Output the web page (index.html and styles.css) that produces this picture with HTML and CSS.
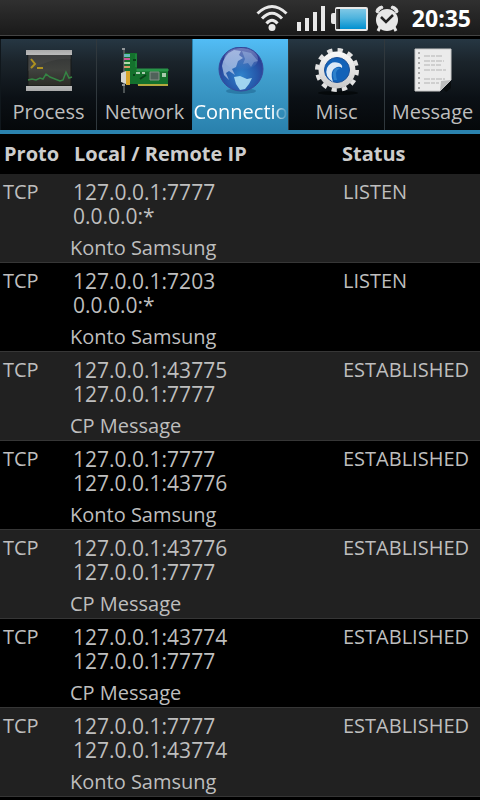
FILE: index.html
```html
<!DOCTYPE html>
<html lang="en">
<head>
<meta charset="utf-8">
<meta name="viewport" content="width=device-width, initial-scale=1">
<title>Connections</title>
<link rel="stylesheet" href="styles.css">
</head>
<body>
<header class="statusbar">
  <svg class="wifi" width="32" height="28" viewBox="0 0 32 28" fill="none" stroke="#e8e8e8" stroke-width="3">
    <path d="M1.500 9.500Q16-4.500 30.500 9.500M6 14.500Q16 4 26 14.500M10.500 19.500Q16 13 21.500 19.500"/>
    <circle cx="16" cy="23.500" r="3.500" fill="#e8e8e8" stroke="none"/>
  </svg>
  <svg class="signal" width="30" height="28" viewBox="0 0 30 28" fill="#e8e8e8">
    <path d="M1 18h4v9H1zM9 14h4v13H9zM17 8h4v19h-4zM25 2h4v25h-4z"/>
  </svg>
  <svg class="battery" width="38" height="28" viewBox="0 0 38 28">
    <defs>
      <linearGradient id="charge" x1="0" y1="0" x2="0" y2="1"><stop offset="0" stop-color="#7fc8e6"/><stop offset=".45" stop-color="#4fb4de"/><stop offset="1" stop-color="#0090d0"/></linearGradient>
      <linearGradient id="drained"><stop offset="0" stop-color="#555"/><stop offset="1" stop-color="#050505"/></linearGradient>
    </defs>
    <path d="M2 9H4V5q0-2 2-2h29q2 0 2 2v20q0 2-2 2H6q-2 0-2-2v-5H2q-2 0-2-2v-7q0-2 2-2z" fill="#e8e8e8"/>
    <path d="M5 5h5v20H5z" fill="url(#drained)"/>
    <path d="M9 5h26v20H9z" fill="url(#charge)"/>
  </svg>
  <svg class="alarm" width="26" height="28" viewBox="0 0 26 28" fill="#e8e8e8">
    <path d="M2 8Q2 3 8 2L9 4Q5 5 4 9zM24 8Q24 3 18 2L17 4Q21 5 22 9z" stroke="#e8e8e8" stroke-width="1"/>
    <path d="M6 23l-2 4M20 23l2 4" stroke="#e8e8e8" stroke-width="3"/>
    <circle cx="13" cy="16" r="11"/>
    <path d="M7 13l5 5 7-7" fill="none" stroke="#222" stroke-width="2.500"/>
  </svg>
  <time class="clock">20:35</time>
</header>

<nav class="tabs">
  <button class="tab" type="button">
    <svg class="tab-icon" viewBox="0 0 48 48">
      <defs>
        <linearGradient id="bar" x1="0" y1="0" x2="0" y2="1"><stop offset="0" stop-color="#aaa"/><stop offset=".5" stop-color="#f0f0f0"/><stop offset="1" stop-color="#aaa"/></linearGradient>
        <linearGradient id="screen" x1="0" y1="0" x2="0" y2="1"><stop offset="0" stop-color="#343636"/><stop offset=".5" stop-color="#40423e"/><stop offset="1" stop-color="#2c2c26"/></linearGradient>
      </defs>
      <path d="M3 7h43v32H3z" fill="url(#screen)" stroke="#161819"/>
      <path d="M3 24Q28 10 46 12V7H3z" fill="#555" opacity=".3"/>
      <path d="M1 3h46v5H1zM1 39h46v5H1z" fill="url(#bar)"/>
      <path d="M6 12l4 5-4 4M12 21h6" fill="none" stroke="#ae9120" stroke-width="2"/>
      <path d="M3 33l4-1 4 1 4-2 3 1 3-5 4 3 5 2 5 2 3-1 3-8 3 6 3-1" fill="none" stroke="#358544" stroke-width="1.500"/>
    </svg>
    <span class="tab-label">Process</span>
  </button>
  <button class="tab" type="button">
    <svg class="tab-icon" viewBox="0 0 48 48">
      <path d="M4 6h12v16h31v16H17l-1-1H4z" fill="#14712d"/>
      <path d="M16 22h31v2H16zM15 7v13" fill="#299448" stroke="#299448"/>
      <path d="M3 2v44" stroke="#4c5254" stroke-width="2"/>
      <path d="M1 2h3M1 38h3" stroke="#92979a" stroke-width="2"/>
      <path d="M3 7h6v3H3z" fill="#65b9b7"/><path d="M3 11h6v2H3z" fill="#cd5798"/><path d="M3 15h6v2H3z" fill="#b2d9ab"/><path d="M3 19h6v2H3z" fill="#d59b68"/>
      <path d="M5 24h4v14H5z" fill="#d8a529"/><path d="M0 26l5-2v13l-5-2z" fill="#d5d4cd"/>
      <path d="M17 37h30v2H17z" fill="#b4a93e"/>
      <path d="M29 25h9v8h-9z" fill="#50625a" stroke="#849389"/>
      <path d="M15 26h4m2 0h3m17 1h4m-4 2h4" stroke="#a8cbad" stroke-width="2"/>
      <path d="M19 32l6-4M12 13h3M12 28h2" stroke="#0a421a" stroke-width="2"/>
    </svg>
    <span class="tab-label">Network</span>
  </button>
  <button class="tab tab-active" type="button" aria-current="page">
    <svg class="tab-icon" viewBox="0 0 48 48">
      <defs>
        <radialGradient id="globe" cx=".5" cy=".65" r=".6"><stop offset="0" stop-color="#2f83cc"/><stop offset=".6" stop-color="#2659ab"/><stop offset="1" stop-color="#2b3990"/></radialGradient>
        <linearGradient id="shine" x1="0" y1="0" x2="0" y2="1"><stop offset="0" stop-color="#c4d2f2" stop-opacity=".45"/><stop offset="1" stop-color="#c4d2f2" stop-opacity="0"/></linearGradient>
        <filter id="haze"><feGaussianBlur stdDeviation=".7"/></filter>
      </defs>
      <ellipse cx="24" cy="44" rx="15" ry="3" fill="#1b608c" opacity=".5"/>
      <circle cx="24" cy="22" r="22" fill="url(#globe)" stroke="#374a9c"/>
      <g filter="url(#haze)">
        <path d="M5 19Q7 7 17 3l7 1-2 4 4 3-5 3-2 6-4 2 3 6-6-4-3 2 3 7-5-5z" fill="#a6bfe5" opacity=".8"/>
        <path d="M25 4l9 2 7 8-4 1-3 5-3-4-5 1 2-5z" fill="#7695cd" opacity=".65"/>
        <path d="M17 30l6-1 7 3 5-1-3 6-4 5-5 1-4-6z" fill="#a5d9f2" opacity=".95"/>
      </g>
      <ellipse cx="24" cy="12" rx="17" ry="11" fill="url(#shine)"/>
    </svg>
    <span class="tab-label">Connectio</span>
  </button>
  <button class="tab" type="button">
    <svg class="tab-icon" viewBox="0 0 48 48">
      <defs><linearGradient id="gear" x1="0" y1="0" x2="0" y2="1"><stop offset="0" stop-color="#fafafa"/><stop offset="1" stop-color="#c9c9c9"/></linearGradient></defs>
      <ellipse cx="25" cy="46" rx="20" ry="2" fill="#05090b"/>
      <circle cx="24" cy="23" r="20" fill="none" stroke="#e2e2e2" stroke-width="4" stroke-dasharray="5.240 5.232"/>
      <circle cx="24" cy="23" r="18.500" fill="url(#gear)"/>
      <circle cx="24" cy="23" r="12.500" fill="#1262b8" stroke="#1b5098"/>
      <path d="M20 35Q11 29 14 21q4-8 12-5 4 2 3 5-2-2-5-1-8 3-4 15z" fill="#dce9f6"/>
      <path d="M21 33q-3-9 2-12 3-1 4 1-3 0-4 4 0 4 1 7z" fill="#2d80cb"/>
    </svg>
    <span class="tab-label">Misc</span>
  </button>
  <button class="tab" type="button">
    <svg class="tab-icon" viewBox="0 0 48 48">
      <path d="M6 2h36v31L31 44H6z" fill="#ebebeb" stroke="#c9c9c9"/>
      <path d="M31 44l1-10 10-1z" fill="#bdbdbd"/><path d="M34 42l8-8v7l-5 4z" fill="#090c0e"/>
      <path d="M10 5v38" stroke="#aaa" stroke-width="2" stroke-dasharray="2 3"/>
      <path d="M15 9h19M15 14h20M15 18h17M15 23h22M15 32h21M15 36h15" stroke="#b3b3b3" stroke-dasharray="6 1 4 1"/>
    </svg>
    <span class="tab-label">Message</span>
  </button>
</nav>

<main>
<table class="connections">
  <colgroup><col class="col-proto"><col class="col-address"><col class="col-status"></colgroup>
  <thead>
    <tr><th scope="col">Proto</th><th scope="col">Local / Remote IP</th><th scope="col">Status</th></tr>
  </thead>
  <tbody>
    <tr><td>TCP</td><td><div class="ip">127.0.0.1:7777<br>0.0.0.0:*</div><div class="app">Konto Samsung</div></td><td>LISTEN</td></tr>
    <tr><td>TCP</td><td><div class="ip">127.0.0.1:7203<br>0.0.0.0:*</div><div class="app">Konto Samsung</div></td><td>LISTEN</td></tr>
    <tr><td>TCP</td><td><div class="ip">127.0.0.1:43775<br>127.0.0.1:7777</div><div class="app">CP Message</div></td><td>ESTABLISHED</td></tr>
    <tr><td>TCP</td><td><div class="ip">127.0.0.1:7777<br>127.0.0.1:43776</div><div class="app">Konto Samsung</div></td><td>ESTABLISHED</td></tr>
    <tr><td>TCP</td><td><div class="ip">127.0.0.1:43776<br>127.0.0.1:7777</div><div class="app">CP Message</div></td><td>ESTABLISHED</td></tr>
    <tr><td>TCP</td><td><div class="ip">127.0.0.1:43774<br>127.0.0.1:7777</div><div class="app">CP Message</div></td><td>ESTABLISHED</td></tr>
    <tr><td>TCP</td><td><div class="ip">127.0.0.1:7777<br>127.0.0.1:43774</div><div class="app">Konto Samsung</div></td><td>ESTABLISHED</td></tr>
  </tbody>
</table>
</main>
</body>
</html>
```
FILE: styles.css
```css
* {
  box-sizing: border-box;
}

body {
  margin: 0;
  background: #000;
  color: #bebebe;
  font-family: "Open Sans", "Noto Sans", sans-serif;
  font-size: 20px;
  line-height: 24px;
}

.statusbar {
  display: flex;
  align-items: center;
  justify-content: flex-end;
  gap: 5px;
  height: 38px;
  padding: 0 9px 0 0;
  background: linear-gradient(#303030, #191919);
  border-bottom: 2px solid #000;
  box-shadow: inset 0 -1px #444;
}

.wifi {
  margin-right: 3px;
}

.clock {
  margin-left: 7px;
  color: #fff;
  font-size: 23px;
  font-weight: 700;
}

.tabs {
  display: grid;
  grid-template-columns: repeat(5, minmax(0, 1fr));
  height: 96px;
  border-top: 1px solid #000;
  border-bottom: 4px solid #2a82ae;
}

.tab {
  display: flex;
  flex-direction: column;
  align-items: center;
  gap: 3px;
  min-width: 0;
  margin: 0;
  padding: 8px 0 0;
  border: 0;
  border-left: 1px solid #30383d;
  background: linear-gradient(#263743, #1b242b 25%, #0b1015 65%, #05080a);
  color: #bebebe;
  font: inherit;
}

.tab:first-child {
  border-color: #10171c;
}

.tab-active {
  border-color: #2a82ae;
  background: linear-gradient(#52bdf6, #409fce 40%, #2a82ae);
  color: #fff;
}

.tab-icon {
  flex: none;
  width: 48px;
  height: 48px;
}

.tab-label {
  line-height: 28px;
  white-space: nowrap;
}

.tab-active .tab-label {
  mask-image: linear-gradient(to right, #000 85%, transparent);
}

.connections {
  width: 100%;
  border-collapse: collapse;
  table-layout: fixed;
}

.col-proto {
  width: 70px;
}

.col-status {
  width: 140px;
}

th {
  height: 40px;
  padding: 0 0 0 4px;
  color: #cdcdcd;
  text-align: left;
  white-space: nowrap;
}

th:last-child {
  padding-left: 2px;
}

td {
  padding: 6px 0 2px 3px;
  border-bottom: 1px solid #363636;
  vertical-align: top;
  white-space: nowrap;
}

td:nth-child(2) {
  padding-left: 0;
}

tbody tr:nth-child(odd) {
  background: #212121;
}

.ip {
  padding-left: 3px;
  font-size: 21px;
}

.app {
  margin-top: 8px;
}
```
